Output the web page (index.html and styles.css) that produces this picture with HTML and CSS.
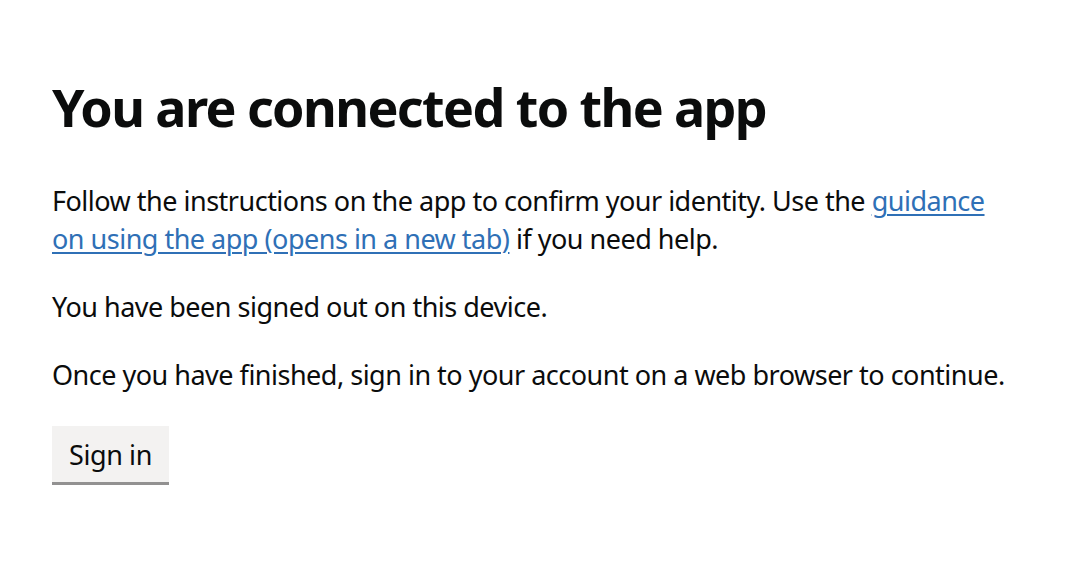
FILE: index.html
```html
<!DOCTYPE html>
<html lang="en">
<head>
  <meta charset="UTF-8">
  <meta name="viewport" content="width=device-width, initial-scale=1.0">
  <title>You are connected to the app</title>
  <link rel="stylesheet" href="styles.css">
</head>
<body>
  <main class="page">
    <h1 class="heading-l">You are connected to the app</h1>

    <p class="body">Follow the instructions on the app to confirm your identity. Use the <a class="link" href="#">guidance on using the app (opens in a new tab)</a> if you need help.</p>

    <p class="body">You have been signed out on this device.</p>

    <p class="body">Once you have finished, sign in to your account on a web browser to continue.</p>

    <button class="button button-secondary" type="button">Sign in</button>
  </main>
</body>
</html>
```

FILE: styles.css
```css
body{
  margin:0;
  background:#fff;
  color:#0b0c0c;
  font-family:"Noto Sans", Arial, sans-serif;
}

.page{
  width:962px;
  padding:77px 0 0 52px;
}

.heading-l{
  margin:0 0 45px;
  font-size:52px;
  line-height:60px;
  font-weight:700;
  letter-spacing:-1.6px;
}

.body{
  margin:0 0 30px;
  font-size:27px;
  line-height:38px;
  letter-spacing:-0.5px;
}

.link{
  color:#2f70b6;
  text-decoration:underline;
  text-decoration-thickness:2px;
  text-underline-offset:3px;
}

.button{
  display:inline-block;
  margin:2px 0 0;
  padding:14px 17px 12px;
  border:0;
  border-radius:0;
  appearance:none;
  font-family:inherit;
  font-size:27px;
  line-height:30px;
  letter-spacing:-0.4px;
  cursor:pointer;
}

.button-secondary{
  background:#f3f2f1;
  color:#0b0c0c;
  border-bottom:3px solid #929191;
}
```
